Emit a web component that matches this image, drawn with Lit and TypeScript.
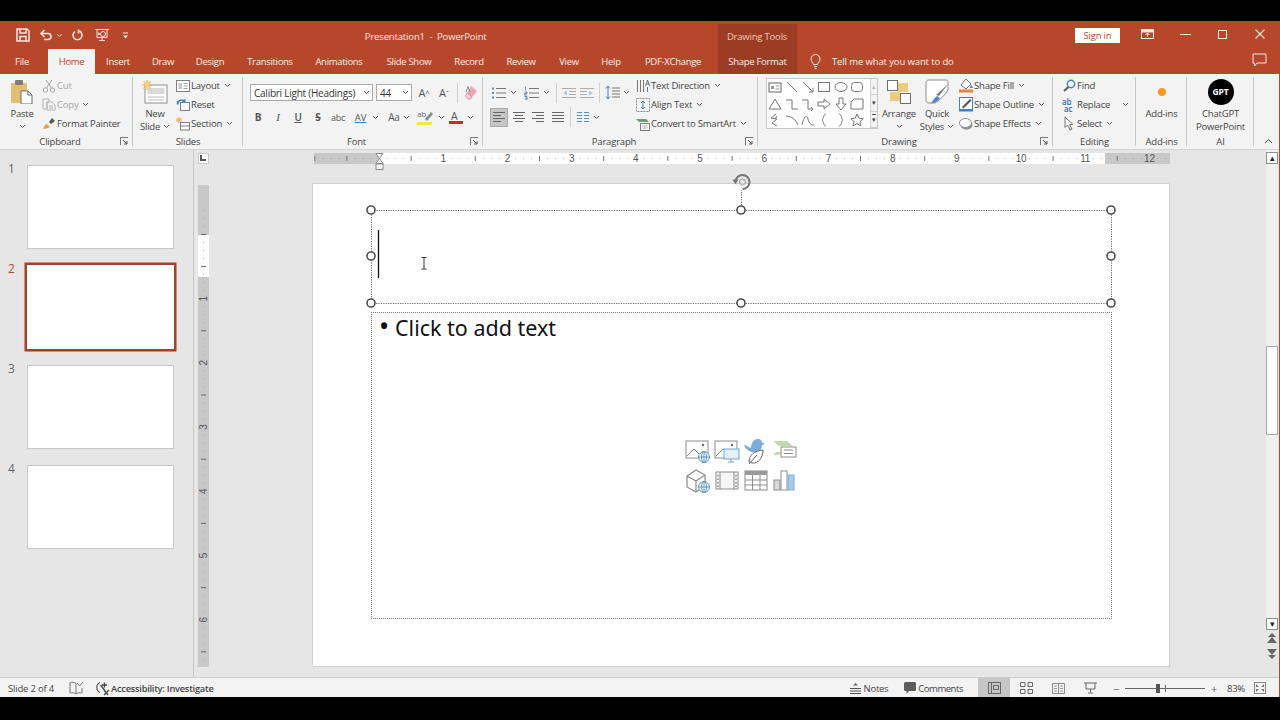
import { LitElement, css, html, svg } from 'lit';
import { customElement } from 'lit/decorators.js';

const ic = (w: number, h: number, body: unknown) =>
  html`<svg class="ic" width=${w} height=${h} viewBox="0 0 ${w} ${h}" fill="none">${body}</svg>`;

const chev = html`<svg class="ic chev" width="7" height="5" viewBox="0 0 7 5" fill="none"><path d="M1 1l2.5 2.5L6 1" stroke="#555" stroke-width="1"/></svg>`;

const lines = (c: string, rows: number[][]) =>
  rows.map(([x1, y, x2]) => svg`<path d="M${x1} ${y}H${x2}" stroke=${c} stroke-width="1"/>`);

const W = '#f6e7e1';
const icons = {
  save: ic(14, 14, svg`<path d="M1 1h10l2 2v10H1z M4 1v4h6V1 M4 13V8.500h6V13" stroke=${W} stroke-width="1.500"/>`),
  undo: ic(14, 12, svg`<path d="M2 4.500h7a3 3 0 0 1 0 6H5 M5.500 1L2 4.500 5.500 8" stroke=${W} stroke-width="1.600"/>`),
  redo: ic(12, 12, svg`<path d="M4 2.500a4.500 4.500 0 1 0 5 0 M7 2.500h3.500 M7.500 .5v4" stroke=${W} stroke-width="1.500"/>`),
  present: ic(16, 14, svg`<path d="M1 1.500h14 M3 1.500v8h10v-8 M8 9.500v3 M5 12.500h6" stroke=${W} stroke-width="1"/><circle cx="9" cy="6" r="2.500" stroke=${W}/><path d="M4 4.500l3 1.500-3 1.500z" fill=${W}/>`),
  custom: ic(7, 7, svg`<path d="M1 1h5" stroke=${W}/><path d="M1 3.500h5L3.500 6.500z" fill=${W}/>`),
  restore: ic(13, 10, svg`<rect x=".5" y=".5" width="12" height="9" stroke=${W}/><rect x="1" y="1" width="11" height="2.500" fill=${W}/><path d="M6.500 8V4.500M4.500 6l2-2 2 2" stroke=${W}/>`),
  min: ic(11, 3, svg`<path d="M0 1.500h11" stroke=${W}/>`),
  max: ic(9, 9, svg`<rect x=".5" y=".5" width="8" height="8" stroke=${W}/>`),
  close: ic(10, 10, svg`<path d="M.5 .5l9 9M9.500 .5l-9 9" stroke=${W} stroke-width="1.100"/>`),
  lamp: ic(11, 15, svg`<path d="M3.500 10.500C3 8.500 1 7.500 1 5a4.500 4.500 0 0 1 9 0c0 2.500-2 3.500-2.500 5.500z M4 12.500h3 M4.500 14.500h2" stroke=${W}/>`),
  comment: ic(15, 14, svg`<path d="M1 1h13v9H5l-2.500 3v-3H1z" stroke=${W}/>`),
  paste: ic(24, 24, svg`<rect x="1" y="3" width="16" height="20" fill="#e3bd72"/><rect x="5" y="0" width="8" height="5" rx="1" fill="#7d7d7d"/><path d="M11 11h7l4 4v9H11z" fill="#fff" stroke="#6d6d6d"/><path d="M18 11v4h4" stroke="#6d6d6d"/>`),
  cut: ic(14, 14, svg`<circle cx="3.500" cy="11" r="2.200" stroke="#a5a5a5"/><circle cx="10.500" cy="11" r="2.200" stroke="#a5a5a5"/><path d="M4.500 9L10 1M9.500 9L4 1" stroke="#a5a5a5"/>`),
  copy: ic(14, 13, svg`<path d="M1 1h6v3h-2v7H1z M5 4h5l3 3v5H5z" stroke="#b5b5b5"/><path d="M7 8h4M7 10h4" stroke="#b5b5b5"/>`),
  painter: ic(14, 13, svg`<path d="M1 12c1-3 2-4 4-5l3 3c-2 1-4 2-7 2z" fill="#e2a34e"/><path d="M7 5l3-4 3 3-4 3z" fill="#555"/>`),
  newSlide: ic(26, 24, svg`<rect x="3" y="5" width="22" height="18" fill="#fff" stroke="#8f8f8f"/><rect x="5.500" y="8" width="17" height="6" fill="#d9d9d9"/><path d="M6 17h16M6 20h16" stroke="#bdbdbd"/><g stroke="#efb84e" stroke-width="1.200"><path d="M0 5h10M5 0v10M1.500 1.500l7 7M8.500 1.500l-7 7"/></g><circle cx="5" cy="5" r="2" fill="#f7d478"/>`),
  layout: ic(14, 14, svg`<rect x=".5" y="1.500" width="13" height="11" fill="#fff" stroke="#7f7f7f"/><rect x="2.500" y="4" width="3.500" height="6" fill="#c9c9c9"/><path d="M7.500 4.500h4M7.500 7h4M7.500 9.500h4" stroke="#9a9a9a"/>`),
  reset: ic(14, 14, svg`<rect x="4.500" y="4.500" width="9" height="8" fill="#fff" stroke="#7f7f7f"/><path d="M1.500 6.500a4 4 0 0 1 7-3" stroke="#3d83c4" stroke-width="1.600"/><path d="M9.500 .5v4h-4z M.5 3h2v4z" fill="#3d83c4"/>`),
  section: ic(14, 14, svg`<path d="M3 0v6M0 3h6M1 1l4 4M5 1L1 5" stroke="#eda64a"/><rect x="4.500" y="5.500" width="9" height="7.500" fill="#fff" stroke="#7f7f7f"/><path d="M4.500 9h9" stroke="#7f7f7f"/>`),
  eraser: ic(16, 16, svg`<path d="M8 1l6 5-5 6-5-4z" fill="#e9a6b5"/><path d="M4 8l5 4-1.500 2H5L2.500 11z" fill="#f4d3da" stroke="#c9a"/><path d="M3 7L5 1.500 7 7" stroke="#8a8a8a"/>`),
  highlight: ic(18, 18, svg`<text x="0" y="9" font-family="Open Sans" font-size="8" fill="#666">ab</text><path d="M8 11l6-7 2 2-6 7z" fill="#8a8a8a"/><rect x="0" y="14" width="15" height="3" fill="#f6ea2f"/>`),
  fontColor: ic(16, 18, svg`<text x="3" y="11.500" font-family="Open Sans" font-size="10.500" fill="#555">A</text><rect x="1" y="13" width="14" height="3" fill="#d8232a"/>`),
  bullets: ic(16, 14, svg`<path d="M1 2.500h2M1 7h2M1 11.500h2" stroke="#5a8db8" stroke-width="2"/>${lines('#777', [[5, 2.5, 15], [5, 7, 15], [5, 11.5, 15]])}`),
  numbers: ic(16, 14, svg`<path d="M1.500 .5v4M.5 6h2.500v1.500H.5V9H3M.5 10.500H3V14H.5M1 12.200h2" stroke="#3b78ad" stroke-width=".8"/>${lines('#777', [[5, 2.5, 15], [5, 7, 15], [5, 11.5, 15]])}`),
  outdent: ic(14, 12, svg`${lines('#adadad', [[0, 1.5, 14], [7, 4.5, 14], [7, 7.500, 14], [0, 10.5, 14]])}<path d="M5 3.500L1 6l4 2.500z" fill="#adc8de"/>`),
  indent: ic(14, 12, svg`${lines('#adadad', [[0, 1.5, 14], [0, 4.5, 7], [0, 7.500, 7], [0, 10.5, 14]])}<path d="M9 3.500L13 6 9 8.500z" fill="#adc8de"/>`),
  spacing: ic(15, 15, svg`<path d="M3 1v13M1 3.500L3 1l2 2.500M1 11.500L3 14l2-2.500" stroke="#3d83c4"/>${lines('#777', [[7, 3, 15], [7, 6, 15], [7, 9, 15], [7, 12, 15]])}`),
  left: ic(14, 12, svg`${lines('#666', [[1, 1.5, 13], [1, 4.5, 9], [1, 7.5, 13], [1, 10.5, 9]])}`),
  center: ic(14, 12, svg`${lines('#666', [[1, 1.5, 13], [3, 4.5, 11], [1, 7.5, 13], [3, 10.5, 11]])}`),
  right: ic(14, 12, svg`${lines('#666', [[1, 1.5, 13], [5, 4.5, 13], [1, 7.5, 13], [5, 10.5, 13]])}`),
  justify: ic(14, 12, svg`${lines('#666', [[1, 1.5, 13], [1, 4.5, 13], [1, 7.5, 13], [1, 10.5, 13]])}`),
  columns: ic(14, 12, svg`${lines('#5f8fb8', [[1, 1.5, 6], [1, 4.5, 6], [1, 7.5, 6], [1, 10.5, 6], [8, 1.5, 13], [8, 4.5, 13], [8, 7.5, 13], [8, 10.5, 13]])}`),
  textDir: ic(14, 14, svg`<path d="M1.500 1v12M4.500 1v12M7.500 1v12" stroke="#777"/><path d="M9.500 7l2-6 2 6M10 5h3" stroke="#555" stroke-width=".8"/><path d="M11.500 8v5" stroke="#3d83c4"/>`),
  alignText: ic(14, 14, svg`<rect x=".5" y=".5" width="13" height="13" stroke="#8a8a8a" stroke-dasharray="2 1"/><path d="M7 3v8M5 5l2-2 2 2M5 9l2 2 2-2" stroke="#3d83c4"/>`),
  smartArt: ic(14, 14, svg`<path d="M0 2h10l3 3H3z" fill="#6a9e70"/><rect x="4.500" y="6.500" width="9" height="7" fill="#fff" stroke="#7f7f7f"/><path d="M6.500 9h5M6.500 11h5" stroke="#aaa"/>`),
  arrange: ic(24, 24, svg`<rect x="11" y="3" width="10" height="9" fill="#eecb7d"/><rect x="3" y="12" width="10" height="9" fill="#eecb7d"/><rect x=".5" y=".5" width="10" height="10" fill="#fff" stroke="#6f6f6f"/><rect x="13.500" y="13.500" width="10" height="10" fill="#fff" stroke="#6f6f6f"/>`),
  quick: ic(24, 26, svg`<path d="M4 1h17c2 0 2 1 2 3v7c-3 5-7 9-13 13H4c-2 0-3-1-3-3V4c0-2 1-3 3-3z" fill="#fff" stroke="#8c8c8c"/><path d="M23 5L14 17l-3-1z" fill="#7b7b7b"/><path d="M12 17l3 2c-2 3-5 5-9 5 2-2 3-5 6-7z" fill="#4f87c2"/>`),
  fill: ic(14, 15, svg`<path d="M7 1L2 7l5 4 5-5z" fill="#fff" stroke="#777"/><path d="M12 7c1 1 2 2 2 3h-3c0-1 .5-2 1-3z" fill="#4f87c2"/><rect x="0" y="11.500" width="14" height="3" fill="#e8843c"/>`),
  outline: ic(14, 15, svg`<rect x=".5" y=".5" width="13" height="13" fill="#fff" stroke="#3d83c4"/><path d="M3 10l8-8 1.500 1.500-8 8z" fill="#555"/><rect x="0" y="12" width="14" height="2.500" fill="#3d83c4"/>`),
  effects: ic(14, 14, svg`<ellipse cx="7.500" cy="8" rx="6" ry="4.500" fill="#8e8e8e"/><ellipse cx="6.500" cy="6" rx="6" ry="4.500" fill="#fff" stroke="#8a8a8a"/>`),
  find: ic(13, 13, svg`<circle cx="8" cy="5" r="3.700" stroke="#3d83c4" stroke-width="1.400"/><path d="M5.500 8L1 12" stroke="#555" stroke-width="1.800"/>`),
  replace: html`<span class="abac"><span>ab</span><span class="ac">ac</span></span>`,
  select: ic(12, 15, svg`<path d="M2 1v10.500l2.500-2.500L7 14l2-1-2.500-4.500H10z" fill="#fff" stroke="#777"/>`),
  launcher: ic(9, 9, svg`<path d="M.5 8V.5H8" stroke="#777"/><path d="M3 3l4 4M7 4v3H4" stroke="#555"/>`),
  collapse: ic(9, 6, svg`<path d="M1 5l3.500-3.500L8 5" stroke="#444"/>`),
  spell: ic(15, 14, svg`<path d="M7 2.500C5 1 3 1 1 1.500V12c2-.5 4-.5 6 1 2-1.500 4-1.500 6-1V7 M7 2.500V13 M8 2l2.500 3L14 1" stroke="#777"/>`),
  access: ic(15, 15, svg`<path d="M5 1.500a5.500 5.500 0 0 0 0 10" stroke="#555" stroke-width="1.200"/><path d="M5.500 4l4 5M9.500 1.500v5M7 4h5M9 9l4 5M14 9l-5 5" stroke="#444" stroke-width="1.300"/>`),
  notes: ic(13, 13, svg`<path d="M6.500 1L4 3.500h5z" fill="#666"/>${lines('#555', [[1, 6.5, 12], [1, 9, 12], [1, 11.5, 12]])}`),
  comments: ic(12, 12, svg`<path d="M0 1.500Q0 0 1.500 0h9Q12 0 12 1.500v6Q12 9 10.500 9H5L2.500 12V9h-1Q0 9 0 7.500z" fill="#5c5c5c"/>`),
  normal: ic(13, 12, svg`<rect x=".5" y=".5" width="12" height="11" stroke="#666"/><path d="M3.500 .5v11M5.500 3.500h5v4h-5z" stroke="#666"/>`),
  sorter: ic(13, 12, svg`<path d="M.5 .5h4.500v4H.5z M8 .5h4.500v4H8z M.5 7.500h4.500v4H.5z M8 7.500h4.500v4H8z" stroke="#666"/>`),
  reading: ic(13, 12, svg`<path d="M.5 1.500h12v10H.5z M6.500 1.500v10" stroke="#8a8a8a"/><path d="M2 4h3M2 6.500h3M2 9h3M8 4h3M8 6.500h3M8 9h3" stroke="#999"/>`),
  show: ic(13, 12, svg`<path d="M0 1h13M2 1v6h9V1 M6.500 7v3M4 11h5" stroke="#666"/>`),
  fit: ic(12, 12, svg`<rect x=".5" y=".5" width="11" height="11" stroke="#888"/><path d="M2 2l3 3H2z M10 2L7 5h3z M2 10l3-3H2z M10 10L7 7h3z" fill="#777"/>`),
};

// the eight buttons in the empty content placeholder
const G = '#8c8c8c';
const B = '#a9cbe6';
const globe = (x: number, y: number) =>
  svg`<circle cx=${x} cy=${y} r="5.500" fill="#fff" stroke="#5a96c4"/><path d="M${x - 5.5} ${y}h11M${x} ${y - 5.5}v11" stroke="#5a96c4"/><ellipse cx=${x} cy=${y} rx="2.500" ry="5.500" stroke="#5a96c4"/>`;
const contentIcons = [
  svg`<rect x="1" y="3" width="22" height="17" fill="#fff" stroke=${G}/><path d="M2 18l7-7 5 5" stroke=${G}/><circle cx="18" cy="7" r="1.200" fill="#666"/>${globe(19, 19)}`,
  svg`<rect x="1" y="3" width="22" height="17" fill="#fff" stroke=${G}/><path d="M2 18l7-7 5 5" stroke=${G}/><circle cx="18" cy="7" r="1.200" fill="#666"/><rect x="10" y="11" width="15" height="10" fill="#e4f0f9" stroke="#6ea5cf"/><path d="M17 21v3M14 24h6" stroke="#6ea5cf"/>`,
  svg`<path d="M1 7c3 0 5 3 7 3 0-4 2-10 8-9 2 .5 3 2 3 3.500l3 1-3 2c0 4-3 7-7 7-6 0-10-4-11-7.500z" fill="#7badd9"/><path d="M6 24c0-7 5-11 14-12 0 8-5 14-11 13z" fill="#fff" stroke="#666"/><path d="M6 26l8-9" stroke="#666"/>`,
  svg`<path d="M1 3h14l6 5H7z" fill="#bcdcaa"/><path d="M1 17h6l3-3H4z" fill="#bcdcaa"/><rect x="9" y="9" width="15" height="10" fill="#fff" stroke=${G}/><path d="M12 12h9M12 15.500h9" stroke=${G}/>`,
  svg`<path d="M2 8l9-6 9 5v11l-9 6-9-5z M2 8l9 5 9-6 M11 13v11" fill="#fff" stroke=${G} stroke-width="1.200"/>${globe(19, 19)}`,
  svg`<rect x="2" y="4" width="22" height="17" fill="#f6f6f6" stroke=${G}/><path d="M6 4v17M20 4v17" stroke=${G}/><path d="M4 7v12M22 7v12" stroke="#555" stroke-dasharray="1.500 2"/>`,
  svg`<rect x="2" y="3" width="22" height="19" fill="#fff" stroke=${G}/><rect x="2" y="3" width="22" height="4" fill="#9a9a9a"/><path d="M9.500 7v15M17 7v15M2 12h22M2 17h22" stroke=${G}/>`,
  svg`<rect x="2" y="12" width="6" height="10" fill="#d9d9d9" stroke=${G}/><rect x="9" y="3" width="6" height="19" fill="#fff" stroke=${G}/><rect x="16" y="7" width="6" height="15" fill=${B} stroke="#7badd9"/>`,
];

const shapes = [
  svg`<rect x="1" y="3" width="12" height="9" stroke="#666"/><path d="M3 6h3v3H3z" fill="#9a9a9a"/><path d="M7.500 6h4M7.500 9h4" stroke="#999"/>`,
  svg`<path d="M2 2l10 10" stroke="#777"/>`,
  svg`<path d="M2 2l10 10M12 8v4H8" stroke="#777"/>`,
  svg`<rect x="1.500" y="2.500" width="11" height="9" stroke="#777"/>`,
  svg`<ellipse cx="7" cy="7" rx="6" ry="4.500" stroke="#777"/>`,
  svg`<rect x="1.500" y="2.500" width="11" height="9" rx="3" stroke="#777"/>`,
  svg`<path d="M7 2l6 10H1z" stroke="#777"/>`,
  svg`<path d="M1 3h6v9h6" stroke="#777"/>`,
  svg`<path d="M1 3h6v9h5M10 10l2 2-2 2" stroke="#777"/>`,
  svg`<path d="M1 5h6V2l6 5-6 5V9H1z" stroke="#777"/>`,
  svg`<path d="M5 1h4v6h3l-5 6-5-6h3z" stroke="#777"/>`,
  svg`<path d="M4 2h9v10H1V5z" stroke="#777"/>`,
  svg`<path d="M8 1L3 5l6 1-5 4 5 3M9 3l-2 3" stroke="#777"/>`,
  svg`<path d="M1 3c6 0 10 4 12 9" stroke="#777"/>`,
  svg`<path d="M1 12C3 3 6 1 7 6s4 6 6 6" stroke="#777"/>`,
  svg`<path d="M9 1C6 1 7 6 5 7c2 1 1 6 4 6" stroke="#777"/>`,
  svg`<path d="M5 1c3 0 2 5 4 6-2 1-1 6-4 6" stroke="#777"/>`,
  svg`<path d="M7 1l1.800 4.200 4.500.4-3.400 3 1 4.400L7 10.700 3.100 13l1-4.400-3.400-3 4.500-.4z" stroke="#777"/>`,
];

const tabs: [string, number][] = [
  ['Insert', 46], ['Draw', 44], ['Design', 50], ['Transitions', 70], ['Animations', 68], ['Slide Show', 72],
  ['Record', 48], ['Review', 56], ['View', 40], ['Help', 44], ['PDF-XChange', 80],
];

const inch = 64.2;
const hTicks = () => {
  const out: unknown[] = [];
  for (let i = -8; i <= 98; i++) {
    const x = 65 + (i * inch) / 8;
    if (i === 0) continue;
    if (i % 8 === 0 && i > 0) {
      out.push(svg`<text x=${x} y="9" text-anchor="middle" font-size="10" font-family="Liberation Sans" fill="#555">${i / 8}</text>`);
    } else if (i % 4 === 0) {
      out.push(svg`<path d="M${x} 3v5" stroke="#777"/>`);
    } else {
      out.push(svg`<path d="M${x} 5v1" stroke="#aaa"/>`);
    }
  }
  return out;
};
const vTicks = () => {
  const out: unknown[] = [];
  for (let i = -3; i <= 53; i++) {
    const y = 49.5 + (i * inch) / 8;
    if (i === 0) {
      out.push(svg`<path d="M3 ${y}h5" stroke="#666"/>`);
    } else if (i % 8 === 0) {
      out.push(svg`<text transform="translate(9 ${y}) rotate(-90)" text-anchor="middle" font-size="10" font-family="Liberation Sans" fill="#555">${i / 8}</text>`);
    } else if (i % 4 === 0) {
      out.push(svg`<path d="M3 ${y}h5" stroke="#666"/>`);
    } else {
      out.push(svg`<path d="M5 ${y}h1" stroke="#aaa"/>`);
    }
  }
  return out;
};

const handles = [[58, 26], [428, 26], [798, 26], [58, 72], [798, 72], [58, 119], [428, 119], [798, 119]];

@customElement('app-root')
export class AppRoot extends LitElement {
  private small(icon: unknown, label: string, hasChev = false, dim = false) {
    return html`<div class="row ${dim ? 'dim' : ''}"><span class="slot">${icon}</span><span>${label}</span>${hasChev ? chev : ''}</div>`;
  }

  private big(icon: unknown, a: string, b: string, cls = '') {
    return html`<div class="big ${cls}">
      <div class="bigicon">${icon}</div>
      <div class="line">${a}</div>
      <div class="line">${b}${b ? ' ' : ''}${cls.includes('nochev') ? '' : chev}</div>
    </div>`;
  }

  private group(cls: string, label: string, launcher: boolean, body: unknown) {
    return html`<section class="group ${cls}">
      <div class="gbody">${body}</div>
      <div class="glabel"><span>${label}</span>${launcher ? html`<i class="launch">${icons.launcher}</i>` : ''}</div>
    </section>`;
  }

  render() {
    return html`
      <div class="window">
        <header class="titlebar">
          <div class="qat">
            ${icons.save}${icons.undo}<span class="qchev">${chev}</span>${icons.redo}${icons.present}${icons.custom}
          </div>
          <div class="doc">Presentation1&nbsp; -&nbsp; PowerPoint</div>
          <div class="ctx">Drawing Tools</div>
          <div class="signin">Sign in</div>
          <div class="wctl">
            <span>${icons.restore}</span><span>${icons.min}</span><span>${icons.max}</span><span>${icons.close}</span>
          </div>
        </header>
        <nav class="tabs">
          <div class="tab file">File</div>
          <div class="tab home">Home</div>
          ${tabs.map(([t, w]) => html`<div class="tab" style="width:${w}px">${t}</div>`)}
          <div class="tab shapefmt">Shape Format</div>
          <div class="tell">${icons.lamp}<span>Tell me what you want to do</span></div>
          <div class="cmt">${icons.comment}</div>
        </nav>
        <div class="ribbon">
          ${this.group('g-clip', 'Clipboard', true, html`
            ${this.big(icons.paste, 'Paste', '', 'paste')}
            <div class="col">
              ${this.small(icons.cut, 'Cut', false, true)}
              ${this.small(icons.copy, 'Copy', true, true)}
              ${this.small(icons.painter, 'Format Painter')}
            </div>`)}
          ${this.group('g-slides', 'Slides', false, html`
            ${this.big(icons.newSlide, 'New', 'Slide', 'news')}
            <div class="col">
              ${this.small(icons.layout, 'Layout', true)}
              ${this.small(icons.reset, 'Reset')}
              ${this.small(icons.section, 'Section', true)}
            </div>`)}
          ${this.group('g-font', 'Font', true, html`
            <div class="stack">
              <div class="frow">
                <div class="combo c1"><span>Calibri Light (Headings)</span>${chev}</div>
                <div class="combo c2"><span>44</span>${chev}</div>
                <div class="fb first">A<sup>^</sup></div>
                <div class="fb">A<sup>ˇ</sup></div>
                <i class="sep"></i>
                <div class="fb">${icons.eraser}</div>
              </div>
              <div class="frow r2">
                <div class="fb b">B</div>
                <div class="fb it">I</div>
                <div class="fb un">U</div>
                <div class="fb st">S</div>
                <div class="fb abc">abc</div>
                <div class="fb w30"><span class="av">AV</span>${chev}</div>
                <div class="fb w30 aa">Aa ${chev}</div>
                <div class="fb w30">${icons.highlight}${chev}</div>
                <div class="fb w30 fc">${icons.fontColor}${chev}</div>
              </div>
            </div>`)}
          ${this.group('g-para', 'Paragraph', true, html`
            <div class="stack s146">
              <div class="frow">
                <div class="pb">${icons.bullets}</div><div class="cb">${chev}</div>
                <div class="pb ml5">${icons.numbers}</div><div class="cb">${chev}</div>
                <i class="sep m5"></i>
                <div class="pb">${icons.outdent}</div><div class="pb">${icons.indent}</div>
                <i class="sep m4"></i>
                <div class="pb">${icons.spacing}</div><div class="cb">${chev}</div>
              </div>
              <div class="frow r2">
                <div class="pb on">${icons.left}</div>
                <div class="pb g1">${icons.center}</div>
                <div class="pb g1">${icons.right}</div>
                <div class="pb g1">${icons.justify}</div>
                <i class="sep m4"></i>
                <div class="pb">${icons.columns}</div><div class="cb">${chev}</div>
              </div>
            </div>
            <div class="col">
              ${this.small(icons.textDir, 'Text Direction', true)}
              ${this.small(icons.alignText, 'Align Text', true)}
              ${this.small(icons.smartArt, 'Convert to SmartArt', true)}
            </div>`)}
          ${this.group('g-draw', 'Drawing', true, html`
            <div class="gallery">
              <div class="shapes">${shapes.map(s => html`<span>${ic(14, 14, s)}</span>`)}</div>
              <div class="scroller">
                <span class="off">▴</span><span>▾</span><span class="more">▾</span>
              </div>
            </div>
            ${this.big(icons.arrange, 'Arrange', '', 'w36')}
            ${this.big(icons.quick, 'Quick', 'Styles', 'w36 quick')}
            <div class="col cfx">
              ${this.small(icons.fill, 'Shape Fill', true)}
              ${this.small(icons.outline, 'Shape Outline', true)}
              ${this.small(icons.effects, 'Shape Effects', true)}
            </div>`)}
          ${this.group('g-edit', 'Editing', false, html`
            <div class="col">
              ${this.small(icons.find, 'Find')}
              <div class="row"><span class="slot">${icons.replace}</span><span>Replace</span><span class="gapchev">${chev}</span></div>
              ${this.small(icons.select, 'Select', true)}
            </div>`)}
          ${this.group('g-add', 'Add-ins', false, this.big(html`<i class="dot"></i>`, 'Add-ins', '', 'nochev full'))}
          ${this.group('g-ai', 'AI', false, this.big(html`<div class="gpt"><span>GPT</span></div>`, 'ChatGPT', 'PowerPoint', 'nochev full'))}
          <div class="collapse">${icons.collapse}</div>
        </div>
        <main class="work">
          <aside class="thumbs">
            ${[1, 2, 3, 4].map(n => html`<div class="titem ${n === 2 ? 'sel' : ''}"><span class="num">${n}</span><div class="thumb"></div></div>`)}
          </aside>
          <div class="editor">
            <div class="corner"><svg width="9" height="9" viewBox="0 0 9 9"><path d="M2 1v5h5" fill="none" stroke="#555" stroke-width="2"/></svg></div>
            <div class="hruler">
              <svg width="856" height="11">
                <rect width="856" height="11" fill="#c8c8c8"/>
                <rect x="65" width="726" height="11" fill="#fff"/>
                ${hTicks()}
              </svg>
              <svg class="indent" width="11" height="17" viewBox="0 0 11 17"><path d="M2 .5h7L5.500 5.500 9 10.500H2l3.500-5z" fill="#fff" stroke="#888"/><rect x="2" y="11" width="7" height="5.500" fill="#fff" stroke="#888"/></svg>
            </div>
            <div class="vruler">
              <svg width="11" height="482">
                <rect width="11" height="482" fill="#c8c8c8"/>
                <rect y="50" width="11" height="42" fill="#fff"/>
                ${vTicks()}
              </svg>
            </div>
            <div class="slide">
              <svg class="frame" width="857" height="483" viewBox="0 0 857 483" fill="none">
                <rect x="58.500" y="26.500" width="740" height="93" stroke="#666" stroke-dasharray="1.200 1.200"/>
                <path d="M428.500 26V6" stroke="#666" stroke-dasharray="1.200 1.200"/>
                <path d="M422.500 -2a7 7 0 1 1 7 7" stroke="#777" stroke-width="2"/>
                <path d="M419.500 -4.500h6l-3 5z" fill="#777"/>
                <circle cx="429.500" cy="-2" r="3" stroke="#999"/>
                ${handles.map(([x, y]) => svg`<circle cx=${x} cy=${y} r="4" fill="#fff" stroke="#4d4d4d" stroke-width="1.600"/>`)}
                <path d="M65.500 46v48" stroke="#111" stroke-width="1.300"/>
                <path d="M108.500 73.500h5M111 73.500v11M108.500 85h5" stroke="#333"/>
              </svg>
              <div class="body-ph">
                <div class="ph-text"><span class="dotb">•</span>Click to add text</div>
                <div class="ph-icons">${contentIcons.map(c => html`${ic(26, 26, c)}`)}</div>
              </div>
            </div>
            <div class="scroll">
              <div class="sbtn">▴</div>
              <div class="sthumb"></div>
              <div class="sbtn down">▾</div>
              <div class="pn">
                <svg width="10" height="12" viewBox="0 0 10 12"><path d="M5 0L1 4h8z M5 4L0 10h10z" fill="#666"/></svg>
                <svg width="10" height="12" viewBox="0 0 10 12"><path d="M0 2h10L5 8z M1 8h8l-4 4z" fill="#666"/></svg>
              </div>
            </div>
          </div>
        </main>
        <footer class="status">
          <span class="s1">Slide 2 of 4</span>
          <span class="sp">${icons.spell}</span>
          <span class="acc">${icons.access}<b>Accessibility: Investigate</b></span>
          <span class="fill"></span>
          <span class="st notes">${icons.notes}Notes</span>
          <span class="st cm">${icons.comments}Comments</span>
          <span class="view on">${icons.normal}</span>
          <span class="view">${icons.sorter}</span>
          <span class="view">${icons.reading}</span>
          <span class="view">${icons.show}</span>
          <span class="zoom">
            <span class="pm">−</span>
            <span class="slider"><i class="mid"></i><i class="knob"></i></span>
            <span class="pm">+</span>
          </span>
          <span class="pct">83%</span>
          <span class="fitb">${icons.fit}</span>
        </footer>
      </div>
    `;
  }

  static styles = css`
    * {
      box-sizing: border-box;
    }
    :host {
      display: block;
      height: 720px;
      padding-top: 21px;
      background: #000;
      font-family: 'Open Sans', 'Liberation Sans', sans-serif;
      font-size: 9.5px;
      letter-spacing: -0.2px;
      color: #444;
    }
    .ic {
      display: block;
      flex: none;
    }
    .window {
      display: flex;
      flex-direction: column;
      width: 1280px;
      height: 676px;
      border-right: 1px solid #b7472a;
      background: #e6e6e6;
    }

    .titlebar {
      display: flex;
      height: 28px;
      flex: none;
      background: #b7472a;
      color: #f8e9e3;
    }
    .qat {
      display: flex;
      align-items: center;
      width: 365px;
      padding-left: 16px;
    }
    .qat svg:nth-child(2) {
      margin-left: 9px;
    }
    .qchev {
      width: 18px;
      padding-left: 3px;
    }
    .qchev path {
      stroke: #f6e7e1;
    }
    .qat svg:nth-child(5) {
      margin-left: 11px;
    }
    .qat svg:nth-child(6) {
      margin-left: 12px;
    }
    .doc {
      width: 353px;
      line-height: 31px;
      letter-spacing: -0.15px;
    }
    .ctx {
      width: 79px;
      margin-top: 3px;
      background: #9c3c24;
      color: #f1c8b8;
      text-align: center;
      line-height: 25px;
    }
    .signin {
      width: 46px;
      height: 15px;
      margin: 7px 0 0 278px;
      background: #fff;
      color: #b7472a;
      text-align: center;
      line-height: 15px;
    }
    .wctl {
      display: flex;
      align-items: center;
      height: 26px;
      margin-left: 8px;
    }
    .wctl span {
      display: flex;
      justify-content: center;
      width: 37.500px;
    }
    .wctl span:first-child {
      width: 38px;
    }

    .tabs {
      display: flex;
      height: 25px;
      flex: none;
      background: #b7472a;
      color: #fbeee9;
      letter-spacing: -0.3px;
    }
    .tab {
      flex: none;
      text-align: center;
      line-height: 26px;
    }
    .file {
      width: 48px;
      padding-right: 4px;
    }
    .home {
      width: 47px;
      background: #f3f3f3;
      color: #b7472a;
    }
    .shapefmt {
      width: 79px;
      margin-left: 5px;
      background: #9c3c24;
    }
    .tell {
      display: flex;
      align-items: center;
      gap: 11px;
      margin-left: 13px;
      font-weight: 500;
      letter-spacing: -0.12px;
      color: #fbeee9;
    }
    .cmt {
      margin: 4px 0 0 auto;
      padding-right: 12px;
    }

    .ribbon {
      display: flex;
      height: 76px;
      flex: none;
      background: #f3f3f3;
      border-bottom: 1px solid #d4d4d4;
    }
    .group {
      position: relative;
      display: flex;
      flex-direction: column;
      flex: none;
      padding-top: 2px;
    }
    .group::after {
      content: '';
      position: absolute;
      top: 3px;
      bottom: 3px;
      right: 0;
      width: 1px;
      background: #c6c6c6;
    }
    .g-clip {
      width: 133px;
    }
    .g-slides {
      width: 110px;
    }
    .g-font {
      width: 240px;
    }
    .g-para {
      width: 275px;
    }
    .g-draw {
      width: 295px;
    }
    .g-edit {
      width: 83px;
    }
    .g-add {
      width: 51px;
    }
    .g-ai {
      width: 67px;
    }
    .gbody {
      display: flex;
      height: 57px;
    }
    .glabel {
      display: flex;
      align-items: center;
      height: 16px;
      padding-top: 1px;
    }
    .glabel span {
      flex: 1;
      text-align: center;
    }
    .launch {
      width: 13px;
    }
    .col {
      display: flex;
      flex-direction: column;
    }
    .row {
      display: flex;
      align-items: center;
      gap: 1px;
      height: 19px;
      white-space: nowrap;
    }
    .row .chev {
      margin-left: 3px;
    }
    .slot {
      display: flex;
      justify-content: center;
      width: 14px;
    }
    .abac {
      display: flex;
      flex-direction: column;
      width: 14px;
      font-size: 8px;
      font-weight: 600;
      line-height: 7px;
      color: #2f6aa8;
    }
    .ac {
      padding-left: 2px;
    }
    .dim {
      color: #a6a6a6;
    }
    .big {
      display: flex;
      flex-direction: column;
      align-items: center;
    }
    .bigicon {
      display: flex;
      align-items: center;
      justify-content: center;
      height: 31px;
    }
    .line {
      display: flex;
      align-items: center;
      gap: 3px;
      height: 13px;
      white-space: nowrap;
    }
    .paste {
      width: 24px;
      margin: 0 8px 0 10px;
    }
    .news {
      width: 26px;
      margin: 0 8px 0 9px;
    }

    .stack {
      display: flex;
      flex-direction: column;
      gap: 6px;
      padding: 8px 0 0 7px;
    }
    .s146 {
      width: 153px;
    }
    .frow {
      display: flex;
      align-items: center;
      height: 17px;
      white-space: nowrap;
    }
    .frow.r2 {
      height: 20px;
    }
    .combo {
      display: flex;
      align-items: center;
      justify-content: space-between;
      height: 17px;
      padding: 0 2px 0 3px;
      background: #fff;
      border: 1px solid #ababab;
      font-size: 10px;
      letter-spacing: -0.25px;
      color: #333;
    }
    .c1 {
      width: 123px;
    }
    .c2 {
      width: 36px;
      margin-left: 3px;
    }
    .fb {
      display: flex;
      align-items: center;
      justify-content: center;
      width: 20px;
      font-size: 11px;
      color: #555;
    }
    .fb.first {
      margin-left: 2px;
    }
    .fb sup {
      font-size: 8px;
      line-height: 0;
    }
    .r2 .fb:first-child {
      margin-left: -2px;
    }
    .b {
      font-weight: 700;
      font-size: 10px;
    }
    .it {
      font-style: italic;
      font-family: 'Liberation Serif', serif;
    }
    .un {
      text-decoration: underline;
      font-weight: 600;
      font-size: 10px;
    }
    .frow .st {
      font-weight: 700;
      font-size: 10px;
      text-decoration: line-through;
    }
    .abc {
      margin-right: 3px;
      font-size: 9px;
    }
    .av {
      font-size: 9.500px;
      text-decoration: underline;
      text-decoration-color: #3d83c4;
      margin-right: 3px;
    }
    .w30 {
      width: 32px;
      gap: 3px;
    }
    .fc {
      margin-left: -2px;
    }
    .aa {
      font-size: 10px;
    }
    .sep {
      flex: none;
      width: 1px;
      height: 20px;
      margin: 0 3px;
      background: #d0d0d0;
    }
    .m5 {
      margin: 0 3px 0 5px;
    }
    .m4 {
      margin: 0 3px;
    }
    .pb {
      display: flex;
      align-items: center;
      justify-content: center;
      flex: none;
      width: 18px;
      height: 19px;
    }
    .cb {
      display: flex;
      justify-content: center;
      width: 10px;
    }
    .ml5 {
      margin-left: 5px;
    }
    .g1 {
      margin-left: 1.500px;
    }
    .pb.on {
      background: #c6c6c6;
      border: 1px solid #aaa;
    }

    .gallery {
      display: flex;
      flex: none;
      width: 112px;
      height: 51px;
      margin: 2px 3px 0 8px;
      background: #fff;
      border: 1px solid #c6c6c6;
    }
    .shapes {
      display: grid;
      grid-template-columns: repeat(6, 16.400px);
      grid-auto-rows: 16.500px;
      width: 104px;
    }
    .shapes span {
      display: flex;
      align-items: center;
      justify-content: center;
    }
    .scroller {
      display: grid;
      grid-template-rows: repeat(3, 1fr);
      width: 7px;
      border-left: 1px solid #d0d0d0;
      font-size: 7px;
      line-height: 16px;
      text-align: center;
    }
    .scroller span {
      border-bottom: 1px solid #d0d0d0;
      background: #f3f3f3;
      overflow: hidden;
    }
    .scroller .off {
      color: #bbb;
    }
    .more {
      text-decoration: overline;
    }
    .w36 {
      flex: none;
      width: 36px;
    }
    .w36 + .w36 {
      margin-left: 2px;
    }
    .cfx {
      margin-left: 4px;
    }
    .g-edit .col {
      padding-left: 9px;
    }
    .gapchev {
      margin-left: 8px;
    }
    .full {
      width: 100%;
    }
    .dot {
      width: 8px;
      height: 8px;
      border-radius: 50%;
      background: #f59a23;
    }
    .gpt {
      display: flex;
      align-items: center;
      justify-content: center;
      width: 26px;
      height: 26px;
      border-radius: 50%;
      background: #000;
      color: #fff;
      font-size: 8.500px;
      font-weight: 700;
    }
    .collapse {
      align-self: flex-end;
      margin: 0 0 5px 10px;
    }

    .work {
      display: flex;
      flex: 1;
      min-height: 0;
      border-bottom: 1px solid #cdcdcd;
    }
    .thumbs {
      display: flex;
      flex-direction: column;
      gap: 16px;
      flex: none;
      width: 194px;
      padding-top: 15px;
      border-right: 1px solid #c8c8c8;
    }
    .titem {
      display: flex;
      height: 84px;
    }
    .num {
      width: 27px;
      padding-left: 8px;
      font-size: 12px;
      line-height: 8px;
      color: #666;
    }
    .thumb {
      width: 147px;
      background: #fff;
      border: 1px solid #c8c8c8;
    }
    .sel .num {
      color: #b7472a;
    }
    .sel .thumb {
      border: none;
      box-shadow: 0 0 0 2.500px #9c4430, 0 0 0 3.500px #f8dccd;
    }

    .editor {
      position: relative;
      display: grid;
      flex: 1;
      grid-template-columns: 4px 11px 104px 857px 96px 12px;
      grid-template-rows: 3px 11px 20px 483px 1fr;
    }
    .corner {
      display: flex;
      align-items: center;
      justify-content: center;
      grid-area: 2 / 2;
      background: #fff;
      border: 1px solid #c8c8c8;
    }
    .hruler {
      position: relative;
      grid-area: 2 / 4;
      margin-left: 1px;
      height: 11px;
    }
    .hruler svg {
      display: block;
    }
    .hruler .indent {
      position: absolute;
      left: 60px;
      top: 0;
    }
    .vruler {
      grid-area: 4 / 2;
      margin-top: 1px;
    }
    .vruler svg {
      display: block;
    }
    .slide {
      position: relative;
      grid-area: 4 / 4;
      background: #fff;
      border-right: 1px solid #d0d0d0;
      border-bottom: 1px solid #d0d0d0;
      box-shadow: -1px -1px 0 #d0d0d0;
    }
    .frame {
      position: absolute;
      inset: 0;
      overflow: visible;
    }
    .body-ph {
      position: absolute;
      left: 58px;
      top: 128px;
      width: 741px;
      height: 307px;
      display: flex;
      align-items: center;
      justify-content: center;
      border: 1px dotted #777;
    }
    .ph-text {
      position: absolute;
      left: 7px;
      top: 0;
      font-family: 'Noto Sans', sans-serif;
      font-size: 21.500px;
      letter-spacing: 0;
      line-height: 30px;
      color: #111;
    }
    .dotb {
      display: inline-block;
      width: 16px;
      font-size: 27px;
      line-height: 0;
    }
    .ph-icons {
      display: grid;
      grid-template-columns: repeat(4, 26px);
      gap: 4px 3px;
    }
    .scroll {
      position: relative;
      display: flex;
      flex-direction: column;
      grid-area: 1 / 6 / -1 / 6;
      padding: 2px 0 0;
      background: #f0f0f0;
    }
    .sbtn {
      height: 12px;
      background: #fff;
      border: 1px solid #8e8e8e;
      font-size: 9px;
      line-height: 9px;
      text-align: center;
      color: #222;
    }
    .sthumb {
      height: 90px;
      margin-top: 182px;
      background: #fff;
      border: 1px solid #aaa;
    }
    .down {
      margin-top: 183px;
    }
    .pn {
      display: flex;
      flex-direction: column;
      align-items: center;
      gap: 2px;
      height: 47px;
      padding-top: 3px;
      background: #e6e6e6;
    }

    .status {
      display: flex;
      align-items: center;
      height: 19px;
      flex: none;
      padding-top: 1px;
      background: #f3f3f3;
      letter-spacing: -0.3px;
      color: #444;
    }
    .s1 {
      width: 61px;
      margin-left: 8px;
      letter-spacing: -0.2px;
    }
    .sp {
      width: 26px;
    }
    .acc {
      display: flex;
      align-items: center;
      gap: 1px;
    }
    .acc b {
      font-weight: 600;
      font-size: 9.300px;
      letter-spacing: -0.25px;
    }
    .fill {
      flex: 1;
    }
    .status .st {
      display: flex;
      align-items: center;
      gap: 2px;
    }
    .notes {
      margin-right: 16px;
    }
    .cm {
      margin-right: 15px;
      letter-spacing: -0.45px;
    }
    .view {
      display: flex;
      align-items: center;
      justify-content: center;
      width: 32px;
      height: calc(100% + 1px);
      margin-top: -1px;
    }
    .view.on {
      background: #c6c6c6;
    }
    .zoom {
      display: flex;
      align-items: center;
      gap: 4px;
      margin-left: 5px;
    }
    .pm {
      width: 10px;
      font-size: 11px;
      text-align: center;
      color: #666;
    }
    .slider {
      position: relative;
      width: 80px;
      height: 1px;
      background: #666;
    }
    .mid {
      position: absolute;
      left: 40px;
      top: -3px;
      width: 1px;
      height: 7px;
      background: #666;
    }
    .knob {
      position: absolute;
      left: 31px;
      top: -4px;
      width: 4px;
      height: 9px;
      background: #555;
    }
    .pct {
      width: 23px;
      margin-left: 8px;
    }
    .fitb {
      padding: 0 13px 0 4px;
    }
  `;
}

declare global {
  interface HTMLElementTagNameMap {
    'app-root': AppRoot;
  }
}
